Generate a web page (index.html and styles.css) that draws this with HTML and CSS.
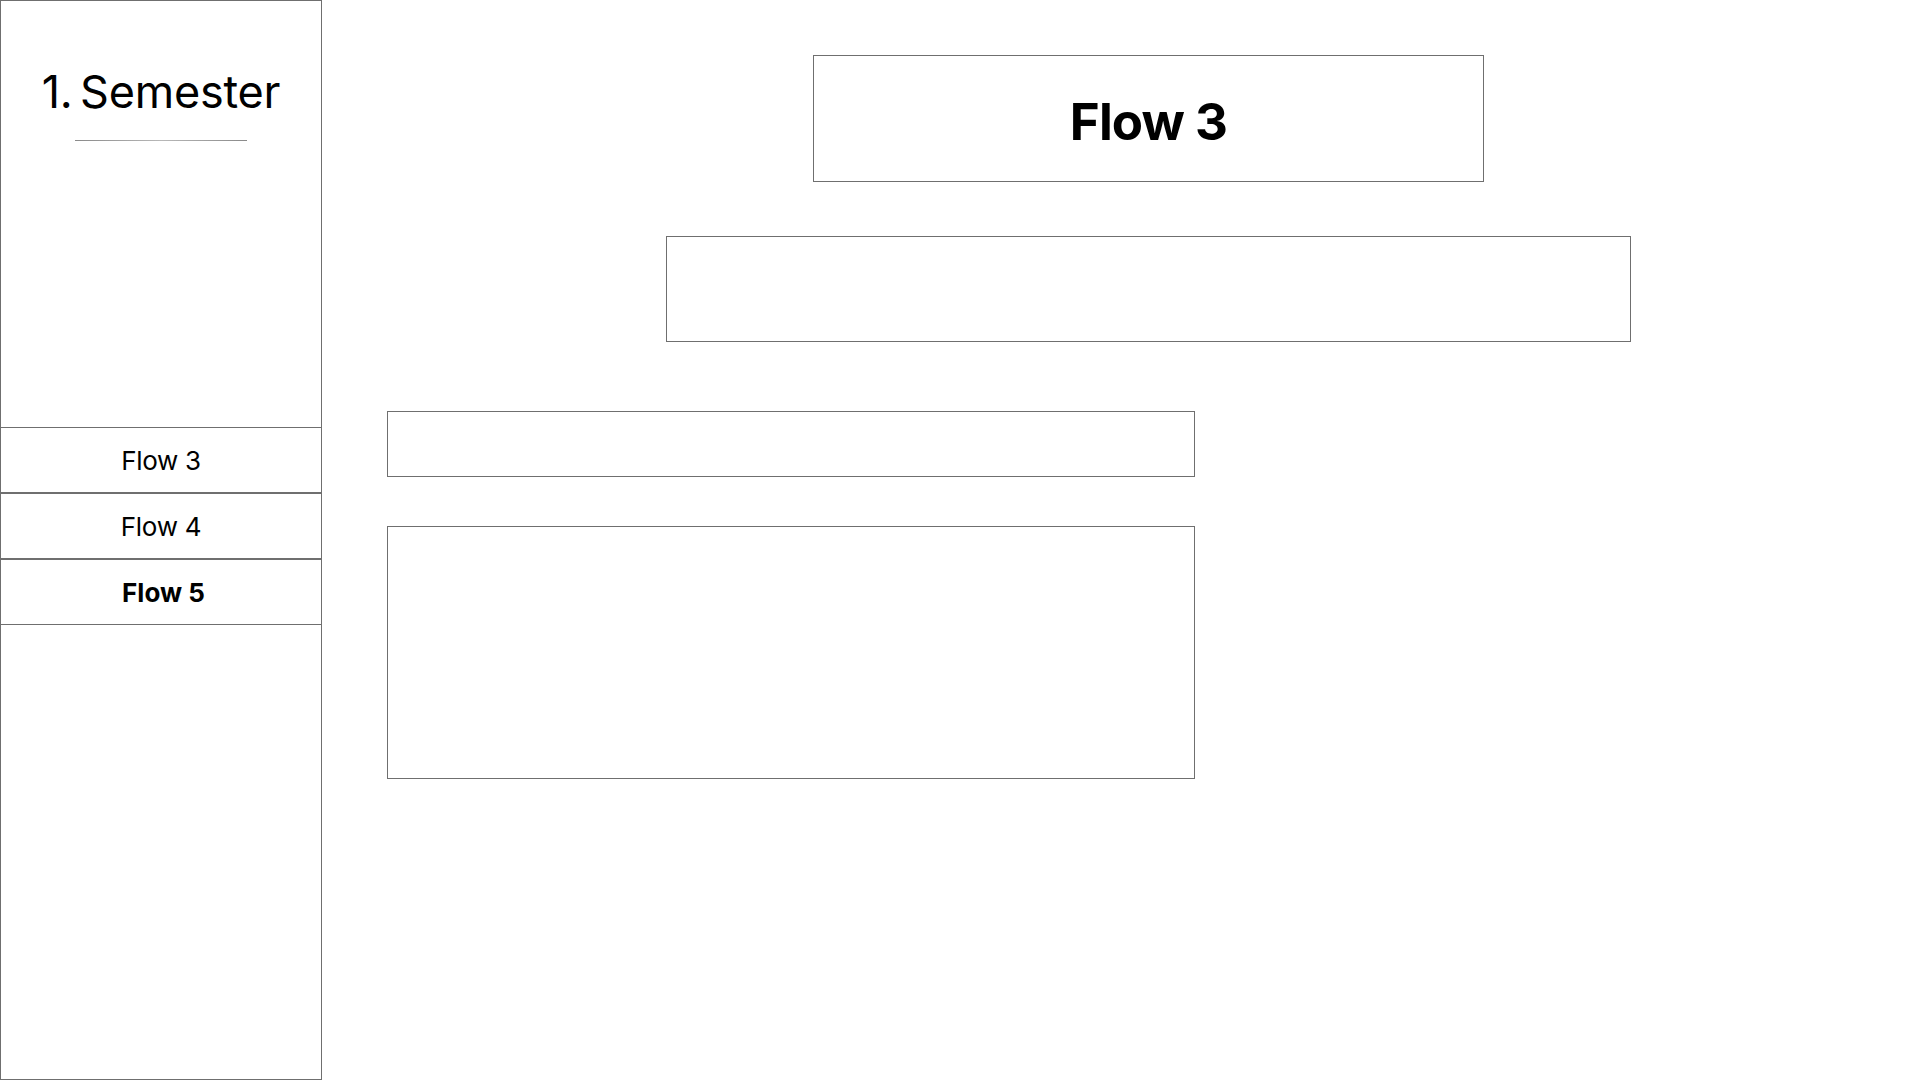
FILE: index.html
```html
<!DOCTYPE html>
<html lang="de">
<head>
<meta charset="utf-8">
<title>1. Semester – Flow 3</title>
<link rel="stylesheet" href="styles.css">
</head>
<body>
<div class="app">
  <aside class="sidebar">
    <div class="sidebar-head">
      <h1 class="semester">1. Semester</h1>
      <div class="divider"></div>
    </div>
    <nav class="nav">
      <a class="nav-item">Flow 3</a>
      <a class="nav-item">Flow 4</a>
      <a class="nav-item active">Flow 5</a>
    </nav>
  </aside>
  <main class="main">
    <div class="title-box"><h2 class="flow-title">Flow 3</h2></div>
    <div class="box box-wide"></div>
    <div class="box box-short"></div>
    <div class="box box-tall"></div>
  </main>
</div>
</body>
</html>
```
FILE: styles.css
```css
* { box-sizing: border-box; }
html, body {
  margin: 0;
  padding: 0;
  background: #ffffff;
  font-family: Inter, "Noto Sans", "Liberation Sans", sans-serif;
  color: #000;
}
.app {
  display: flex;
  width: 1920px;
  height: 1080px;
}
.sidebar {
  width: 322px;
  height: 1080px;
  border: 1px solid #6f6f6f;
  display: flex;
  flex-direction: column;
  flex-shrink: 0;
}
.sidebar-head {
  height: 426px;
  padding-top: 68px;
  display: flex;
  flex-direction: column;
  align-items: center;
}
.semester {
  margin: 0;
  font-size: 45px;
  line-height: 45px;
  font-weight: 400;
  letter-spacing: -0.2px;
  word-spacing: -5px;
}
.divider {
  width: 172px;
  height: 1px;
  margin-top: 26px;
  background: linear-gradient(90deg, #8a8a8a, #b8b8b8 50%, #8a8a8a);
}
.nav {
  display: flex;
  flex-direction: column;
}
.nav-item {
  height: 66px;
  border-top: 1px solid #6f6f6f;
  border-bottom: 1px solid #6f6f6f;
  display: flex;
  align-items: center;
  justify-content: center;
  font-size: 26px;
  font-weight: 400;
  letter-spacing: -0.3px;
  color: #000;
  text-decoration: none;
}
.nav-item.active {
  font-weight: 700;
  letter-spacing: 0;
  padding-left: 5px;
}
.main {
  flex: 1;
  display: flex;
  flex-direction: column;
  padding: 55px 10px 0 65px;
}
.title-box {
  align-self: center;
  width: 671px;
  height: 127px;
  border: 1px solid #6f6f6f;
  display: flex;
  align-items: center;
  justify-content: center;
  padding-top: 6px;
}
.flow-title {
  margin: 0;
  font-size: 51px;
  font-weight: 700;
  letter-spacing: -0.9px;
}
.box {
  border: 1px solid #6f6f6f;
}
.box-wide {
  align-self: center;
  width: 965px;
  height: 106px;
  margin-top: 54px;
}
.box-short {
  width: 808px;
  height: 66px;
  margin-top: 69px;
}
.box-tall {
  width: 808px;
  height: 253px;
  margin-top: 49px;
}
```
